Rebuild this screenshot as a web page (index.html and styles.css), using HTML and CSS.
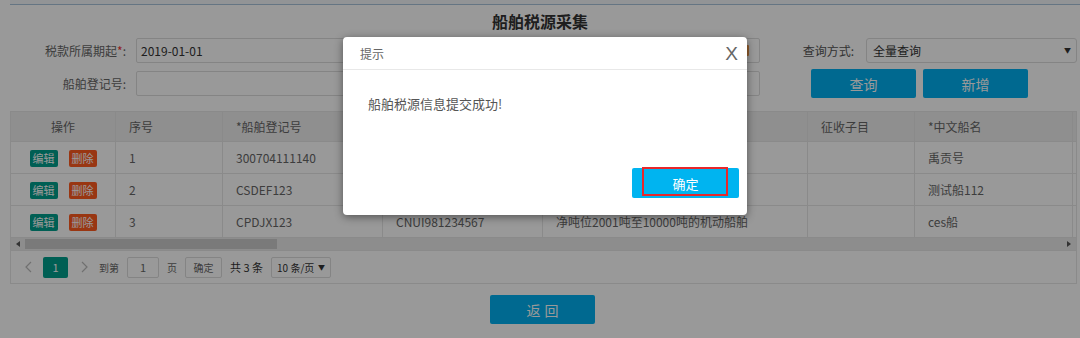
FILE: index.html
```html
<!DOCTYPE html>
<html lang="zh-CN">
<head>
<meta charset="utf-8">
<title>船舶税源采集</title>
<link rel="stylesheet" href="styles.css">
</head>
<body>
<div class="page">
  <div class="topbar"></div>
  <h1 class="title">船舶税源采集</h1>

  <div class="form">
    <div class="field">
      <label class="lbl">税款所属期起<em>*</em>:</label>
      <div class="ipt">2019-01-01<span class="cal"></span></div>
    </div>
    <div class="field field-right">
      <label class="lbl2">查询方式:</label>
      <div class="sel">全量查询<span class="caret">▼</span></div>
    </div>
    <div class="field">
      <label class="lbl">船舶登记号:</label>
      <div class="ipt"></div>
    </div>
    <div class="actions">
      <button class="btn">查询</button>
      <button class="btn">新增</button>
    </div>
  </div>

  <div class="grid">
    <table class="tbl">
      <colgroup>
        <col class="c1"><col class="c2"><col class="c3"><col class="c4"><col class="c5"><col class="c6"><col class="c7"><col class="c8">
      </colgroup>
      <thead>
        <tr><th class="center">操作</th><th>序号</th><th>*船舶登记号</th><th>*船舶识别号</th><th>*吨位</th><th>征收子目</th><th>*中文船名</th><th></th></tr>
      </thead>
      <tbody>
        <tr><td class="center"><span class="mini edit">编辑</span><span class="mini del">删除</span></td><td>1</td><td>300704111140</td><td>CNUI300704111</td><td>净吨位不超过200吨的机动船舶</td><td></td><td>禹贡号</td><td></td></tr>
        <tr><td class="center"><span class="mini edit">编辑</span><span class="mini del">删除</span></td><td>2</td><td>CSDEF123</td><td>CSDEF1234567</td><td>净吨位201吨至2000吨的机动船舶</td><td></td><td>测试船112</td><td></td></tr>
        <tr><td class="center"><span class="mini edit">编辑</span><span class="mini del">删除</span></td><td>3</td><td>CPDJX123</td><td>CNUI981234567</td><td>净吨位2001吨至10000吨的机动船舶</td><td></td><td>ces船</td><td></td></tr>
      </tbody>
    </table>
    <div class="hscroll">
      <span class="arr arr-l"></span>
      <span class="thumb"></span>
      <span class="track-rest"></span>
      <span class="arr arr-r"></span>
    </div>
    <div class="pager">
      <svg class="chev prev" width="7" height="12" viewBox="0 0 7 12"><path d="M6 1 1 6l5 5" fill="none" stroke="currentColor" stroke-width="1.2"/></svg>
      <span class="pcur">1</span>
      <svg class="chev next" width="7" height="12" viewBox="0 0 7 12"><path d="m1 1 5 5-5 5" fill="none" stroke="currentColor" stroke-width="1.2"/></svg>
      <span class="ptxt goto">到第</span>
      <span class="pinput">1</span>
      <span class="ptxt">页</span>
      <span class="pbtn">确定</span>
      <span class="pcount">共&nbsp;3&nbsp;条</span>
      <span class="psel">10 条/页<span class="pcaret">▼</span></span>
    </div>
  </div>

  <div class="footer">
    <button class="btn btn-back">返回</button>
  </div>
</div>

<div class="mask"></div>

<div class="dialog">
  <div class="dlg-head">
    <span class="dlg-title">提示</span>
    <span class="dlg-close">X</span>
  </div>
  <div class="dlg-body">船舶税源信息提交成功!</div>
  <div class="dlg-foot">
    <button class="dlg-ok"><span class="mark"></span>确定</button>
  </div>
</div>
</body>
</html>
```
FILE: styles.css
```css
* { box-sizing: border-box; margin: 0; padding: 0; }
html, body { width: 1080px; height: 338px; overflow: hidden; background: #fff; }
body {
  position: relative;
  font-family: "Noto Sans CJK SC", "Liberation Sans", sans-serif;
  font-size: 12px;
  color: #666;
}

.topbar {
  margin-left: 10px;
  height: 5px;
  background: #f3f7fb;
  border-bottom: 1px solid #a8c4da;
}
.title {
  margin-top: 5px;
  font-size: 16px;
  line-height: 22px;
  font-weight: bold;
  color: #333;
  text-align: center;
}

/* form */
.form {
  margin-top: 6px;
  display: grid;
  grid-template-columns: 760px 317px;
  grid-template-rows: 25px 29px;
  row-gap: 6px;
}
.field { display: flex; align-items: center; }
.lbl {
  width: 126px;
  text-align: right;
  margin-right: 10px;
  color: #666;
}
.lbl em { font-style: normal; color: #e33; }
.ipt {
  position: relative;
  width: 624px;
  height: 25px;
  border: 1px solid #ddd;
  border-radius: 2px;
  padding-left: 4px;
  line-height: 23px;
  color: #333;
}
.cal {
  position: absolute;
  right: 10px;
  top: 6px;
  width: 12px;
  height: 11px;
  border: 2px solid #f29a4a;
  border-radius: 1px;
}
.field-right { padding-left: 34px; }
.lbl2 { width: 60px; text-align: right; margin-right: 12px; color: #555; }
.sel {
  position: relative;
  width: 211px;
  height: 25px;
  border: 1px solid #ddd;
  border-radius: 3px;
  padding-left: 6px;
  line-height: 23px;
  color: #333;
}
.caret {
  position: absolute;
  right: 5px;
  top: 0;
  font-size: 7px;
  color: #333;
}
.actions {
  grid-column: 2;
  padding-left: 51px;
  display: flex;
  gap: 7px;
}
.btn {
  width: 105px;
  height: 29px;
  border: none;
  border-radius: 2px;
  background: #00b0f0;
  color: #fff;
  font-family: inherit;
  font-size: 14px;
}

/* grid */
.grid {
  margin: 13px 0 0 10px;
  width: 1067px;
  border: 1px solid #e6e6e6;
  overflow: hidden;
}
.tbl {
  border-collapse: separate;
  border-spacing: 0;
  table-layout: fixed;
  width: 1240px;
}
.c1 { width: 105px; }
.c2 { width: 107px; }
.c3 { width: 160px; }
.c4 { width: 160px; }
.c5 { width: 265px; }
.c6 { width: 107px; }
.c7 { width: 158px; }
.c8 { width: 178px; }
.tbl th, .tbl td {
  text-align: left;
  font-weight: normal;
  padding: 0 0 0 13px;
  border-right: 1px solid #e6e6e6;
  border-bottom: 1px solid #e6e6e6;
  white-space: nowrap;
  overflow: hidden;
  color: #666;
}
.tbl th { height: 30px; background: #eee; }
.tbl td { height: 32px; }
.tbl .center { text-align: center; padding: 0; }
.mini {
  display: inline-block;
  width: 28px;
  height: 17px;
  line-height: 17px;
  text-align: center;
  font-size: 11px;
  color: #fff;
  border-radius: 2px;
  vertical-align: middle;
}
.mini.edit { background: #009e8c; margin-right: 11px; }
.mini.del { background: #ff5a1f; }

.hscroll {
  display: flex;
  height: 13px;
  background: #ececec;
  border-bottom: 1px solid #e6e6e6;
  align-items: stretch;
}
.arr { width: 14px; position: relative; }
.arr-l::after, .arr-r::after {
  content: "";
  position: absolute;
  top: 3px;
  border-top: 3.5px solid transparent;
  border-bottom: 3.5px solid transparent;
}
.arr-l::after { left: 5px; border-right: 4px solid #555; }
.arr-r::after { left: 5px; border-left: 4px solid #555; }
.thumb { width: 252px; background: #cbcbcb; margin: 1px 0; }
.track-rest { flex: 1; }

.pager {
  display: flex;
  align-items: center;
  height: 32px;
  padding-left: 14px;
  font-size: 10px;
}
.chev { color: #bbb; display: block; }
.pcur {
  margin-left: 11px;
  width: 25px;
  height: 21px;
  line-height: 21px;
  text-align: center;
  background: #009e8c;
  color: #fff;
  border-radius: 2px;
  font-size: 11px;
}
.next { margin-left: 13px; }
.ptxt { color: #666; }
.goto { margin-left: 11px; }
.pinput {
  margin: 0 8px;
  width: 32px;
  height: 21px;
  line-height: 19px;
  text-align: center;
  border: 1px solid #ddd;
  border-radius: 2px;
  color: #666;
  font-size: 11px;
}
.pbtn {
  margin-left: 8px;
  width: 37px;
  height: 21px;
  line-height: 19px;
  text-align: center;
  border: 1px solid #ddd;
  border-radius: 2px;
  color: #666;
}
.pcount { margin-left: 8px; color: #333; font-size: 11px; }
.psel {
  position: relative;
  margin-left: 8px;
  width: 60px;
  height: 21px;
  line-height: 19px;
  border: 1px solid #ddd;
  border-radius: 2px;
  padding-left: 5px;
  color: #333;
}
.pcaret { position: absolute; right: 5px; top: 0; font-size: 7px; }

.footer {
  display: flex;
  justify-content: center;
  padding-left: 5px;
  margin-top: 11px;
}
.btn-back { letter-spacing: 4px; padding-left: 4px; font-size: 14px; }

/* overlay */
.mask {
  position: absolute;
  inset: 0;
  background: rgba(0, 0, 0, 0.4);
}
.dialog {
  position: absolute;
  left: 343px;
  top: 37px;
  width: 404px;
  height: 178px;
  background: #fff;
  border-radius: 4px;
  box-shadow: 0 2px 8px rgba(0, 0, 0, 0.45);
  display: flex;
  flex-direction: column;
}
.dlg-head {
  height: 33px;
  border-bottom: 1px solid #e8e8e8;
  display: flex;
  align-items: center;
  justify-content: space-between;
  padding: 0 9px 0 17px;
}
.dlg-title { font-size: 12px; color: #666; }
.dlg-close {
  font-family: "Liberation Sans", sans-serif;
  font-size: 19px;
  color: #666;
  line-height: 1;
}
.dlg-body {
  height: 98px;
  padding: 24px 0 0 25px;
  font-size: 13px;
  line-height: 20px;
  color: #555;
}
.dlg-foot {
  display: flex;
  justify-content: flex-end;
  padding-right: 8px;
}
.dlg-ok {
  position: relative;
  width: 107px;
  height: 30px;
  border: none;
  border-radius: 2px;
  background: #00b4f0;
  color: #fff;
  font-family: inherit;
  font-size: 13px;
}
.mark {
  position: absolute;
  left: 10px;
  top: -1px;
  width: 86px;
  height: 29px;
  border: 2px solid #e8272b;
  pointer-events: none;
}
```
